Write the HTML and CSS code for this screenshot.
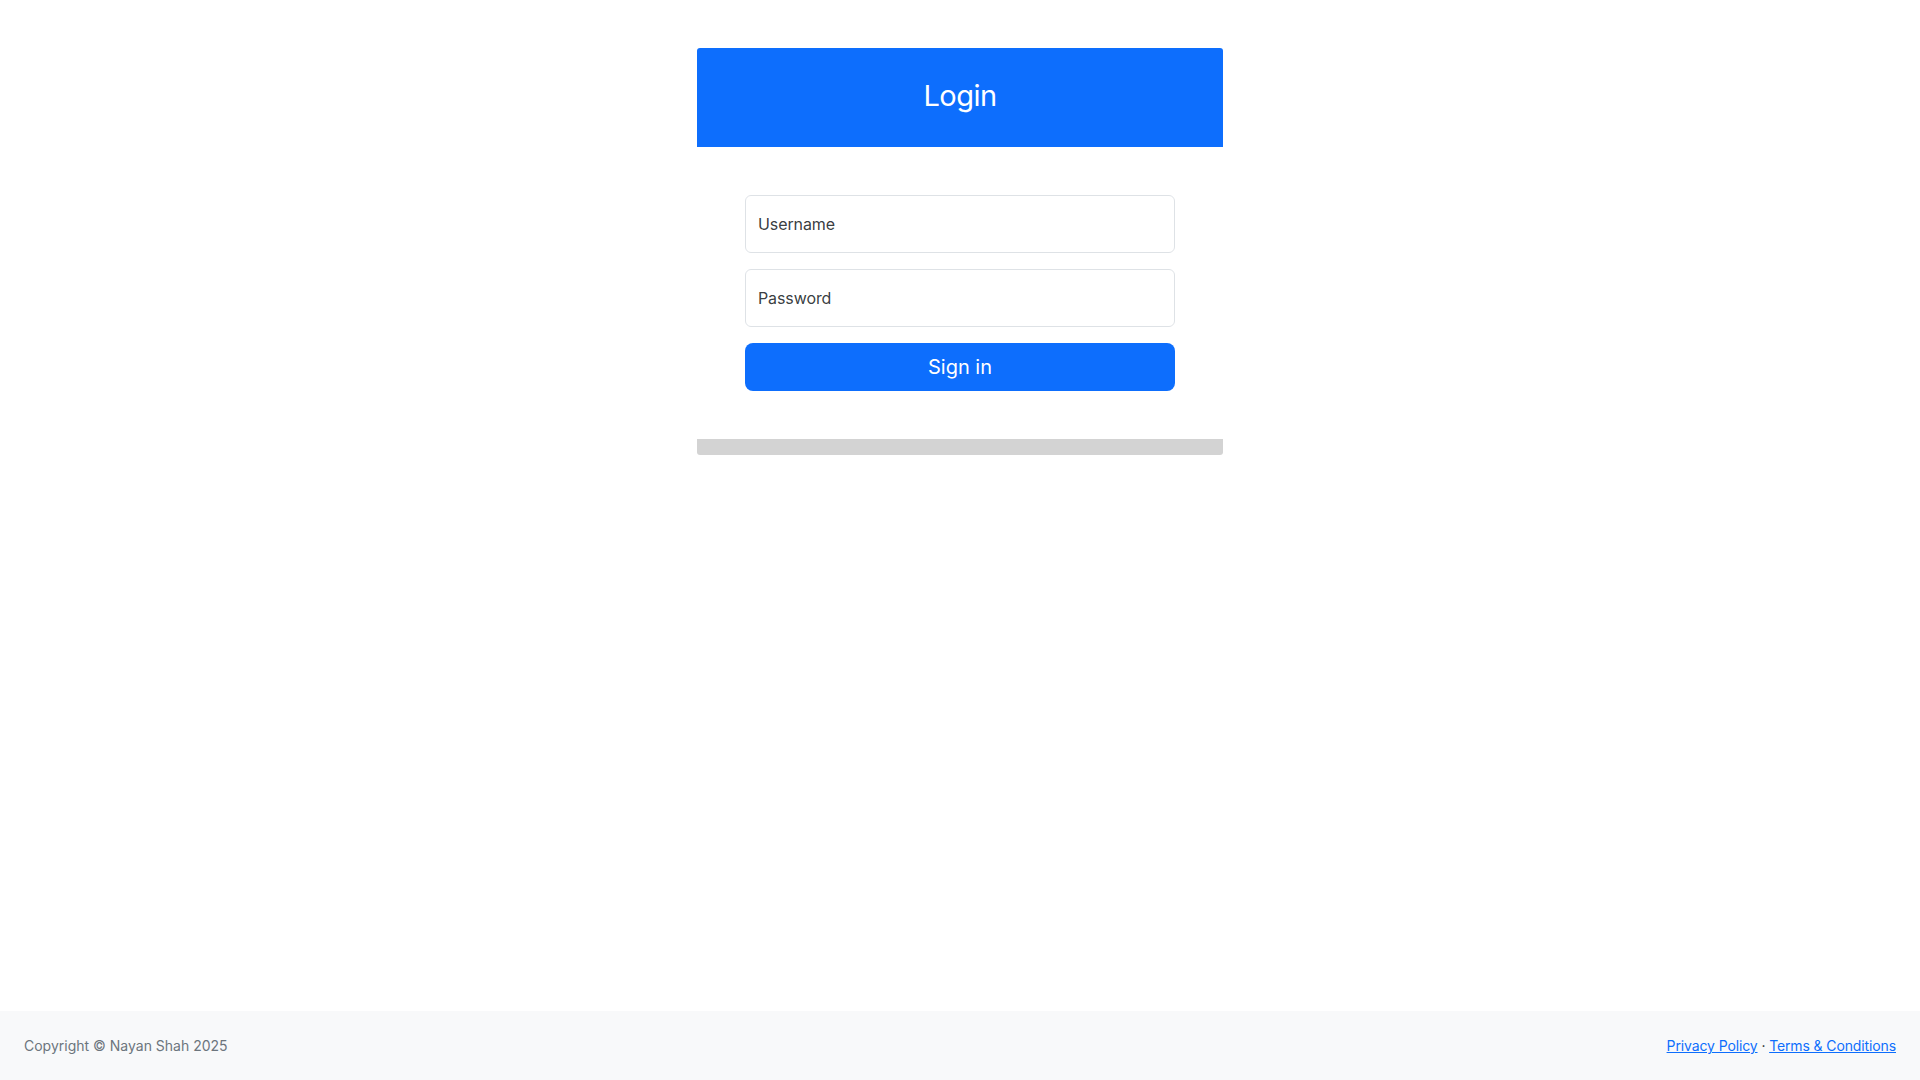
FILE: index.html
```html
<!DOCTYPE html>
<html lang="en">
<head>
<meta charset="utf-8">
<title>Login</title>
<link rel="stylesheet" href="styles.css">
</head>
<body>
<main class="page">
  <div class="card">
    <div class="card-header">
      <h2 class="card-title">Login</h2>
    </div>
    <form class="card-body">
      <div class="field">
        <input class="input" type="text" id="username" placeholder=" ">
        <label class="field-label" for="username">Username</label>
      </div>
      <div class="field">
        <input class="input" type="password" id="password" placeholder=" ">
        <label class="field-label" for="password">Password</label>
      </div>
      <button class="btn-primary" type="button">Sign in</button>
    </form>
    <div class="card-footer"></div>
  </div>
</main>
<footer class="site-footer">
  <span class="copyright">Copyright © Nayan Shah 2025</span>
  <span class="links"><a href="#">Privacy Policy</a> <span class="sep">·</span> <a href="#">Terms &amp; Conditions</a></span>
</footer>
</body>
</html>
```
FILE: styles.css
```css
* { box-sizing: border-box; }
html, body { height: 100%; }
body {
  margin: 0;
  font-family: Inter, "Noto Sans", "Liberation Sans", sans-serif;
  font-size: 16px;
  line-height: 1.5;
  color: #212529;
  background: #fff;
  display: flex;
  flex-direction: column;
  min-height: 100vh;
}
.page {
  flex: 1;
  padding-top: 48px;
  display: flex;
  justify-content: center;
  align-items: flex-start;
}
.card {
  width: 526px;
  background: #fff;
  border-radius: 3px;
  overflow: hidden;
}
.card-header {
  background: #0d6efd;
  height: 99px;
  padding-bottom: 3px;
  display: flex;
  align-items: center;
  justify-content: center;
}
.card-title {
  margin: 0;
  color: #fff;
  font-size: 29px;
  font-weight: 400;
  letter-spacing: -0.5px;
  line-height: 1.2;
}
.card-body {
  padding: 48px;
  display: flex;
  flex-direction: column;
  gap: 16px;
  margin: 0;
}
.field {
  position: relative;
  height: 58px;
}
.input {
  width: 100%;
  height: 58px;
  border: 1px solid #dee2e6;
  border-radius: 6px;
  padding: 16px 12px;
  font-family: inherit;
  font-size: 16px;
  color: #212529;
  background: #fff;
  outline: none;
}
.field-label {
  position: absolute;
  left: 1px;
  top: 1px;
  height: 56px;
  padding: 0 12px;
  display: flex;
  align-items: center;
  color: rgba(33, 37, 41, 0.9);
  font-size: 16px;
  letter-spacing: -0.1px;
  pointer-events: none;
}
.btn-primary {
  height: 48px;
  width: 100%;
  border: none;
  border-radius: 8px;
  background: #0d6efd;
  color: #fff;
  font-family: inherit;
  font-size: 20px;
  cursor: pointer;
}
.card-footer {
  height: 16px;
  background: #d3d3d3;
}
.site-footer {
  background: #f8f9fa;
  padding: 24px;
  display: flex;
  justify-content: space-between;
  align-items: center;
  font-size: 14px;
  line-height: 21px;
}
.copyright { color: #6c757d; }
.links { letter-spacing: -0.12px; }
.links a { color: #0d6efd; text-decoration: underline; }
.sep { color: #212529; }
```
